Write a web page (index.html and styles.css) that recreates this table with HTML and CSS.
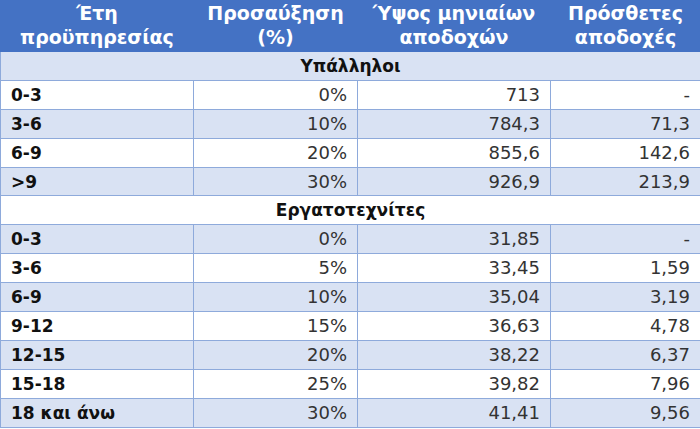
FILE: index.html
```html
<!DOCTYPE html>
<html lang="el">
<head>
<meta charset="utf-8">
<link rel="stylesheet" href="styles.css">
</head>
<body>
<table class="pay">
  <colgroup>
    <col class="c1"><col class="c2"><col class="c3"><col class="c4">
  </colgroup>
  <thead>
    <tr class="head">
      <th>Έτη<br>προϋπηρεσίας</th>
      <th>Προσαύξηση<br>(%)</th>
      <th>Ύψος μηνιαίων<br>αποδοχών</th>
      <th>Πρόσθετες<br>αποδοχές</th>
    </tr>
  </thead>
  <tbody>
    <tr class="alt section"><td colspan="4">Υπάλληλοι</td></tr>
    <tr><td class="lbl">0-3</td><td class="num">0%</td><td class="num">713</td><td class="num">-</td></tr>
    <tr class="alt"><td class="lbl">3-6</td><td class="num">10%</td><td class="num">784,3</td><td class="num">71,3</td></tr>
    <tr><td class="lbl">6-9</td><td class="num">20%</td><td class="num">855,6</td><td class="num">142,6</td></tr>
    <tr class="alt"><td class="lbl">&gt;9</td><td class="num">30%</td><td class="num">926,9</td><td class="num">213,9</td></tr>
    <tr class="section"><td colspan="4">Εργατοτεχνίτες</td></tr>
    <tr class="alt"><td class="lbl">0-3</td><td class="num">0%</td><td class="num">31,85</td><td class="num">-</td></tr>
    <tr><td class="lbl">3-6</td><td class="num">5%</td><td class="num">33,45</td><td class="num">1,59</td></tr>
    <tr class="alt"><td class="lbl">6-9</td><td class="num">10%</td><td class="num">35,04</td><td class="num">3,19</td></tr>
    <tr><td class="lbl">9-12</td><td class="num">15%</td><td class="num">36,63</td><td class="num">4,78</td></tr>
    <tr class="alt"><td class="lbl">12-15</td><td class="num">20%</td><td class="num">38,22</td><td class="num">6,37</td></tr>
    <tr><td class="lbl">15-18</td><td class="num">25%</td><td class="num">39,82</td><td class="num">7,96</td></tr>
    <tr class="alt"><td class="lbl">18 και άνω</td><td class="num">30%</td><td class="num">41,41</td><td class="num">9,56</td></tr>
  </tbody>
</table>
</body>
</html>
```
FILE: styles.css
```css
html, body {
  margin: 0;
  padding: 0;
  background: #ffffff;
}
body {
  font-family: "DejaVu Sans", "Liberation Sans", sans-serif;
}
.pay {
  width: 700px;
  border-collapse: collapse;
  table-layout: fixed;
}
.c1 { width: 193px; }
.c2 { width: 164px; }
.c3 { width: 193px; }
.c4 { width: 150px; }
.head th {
  background: #4472c4;
  color: #ffffff;
  font-weight: bold;
  font-size: 19px;
  line-height: 24px;
  height: 48px;
  padding: 0 2px 2px;
  text-align: center;
  vertical-align: middle;
  border: 1px solid #4472c4;
}
.pay td {
  height: 27.9px;
  padding: 0 10px;
  font-size: 17px;
  line-height: 20px;
  color: #2a2a2a;
  border: 1px solid #8eaadb;
  vertical-align: middle;
  background: #ffffff;
}
.pay tr.alt td {
  background: #d9e2f3;
}
.pay td.lbl {
  font-weight: bold;
  color: #111111;
}
.pay td.num {
  text-align: right;
  font-weight: normal;
  font-size: 18px;
  color: #333333;
}
.pay tr.section td {
  text-align: center;
  font-weight: bold;
  color: #111111;
}
```
